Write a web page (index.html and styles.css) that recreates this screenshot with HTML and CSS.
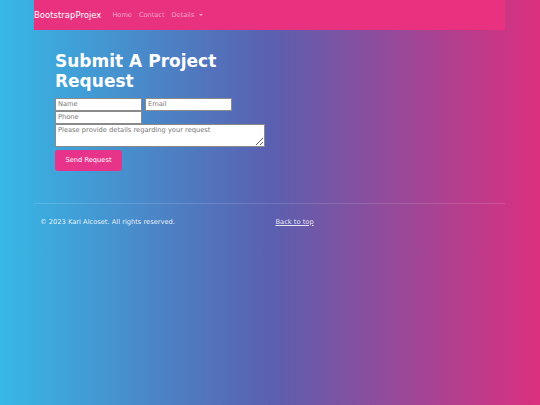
FILE: index.html
```html
<!DOCTYPE html>
<html lang="en">
<head>
<meta charset="utf-8">
<title>BootstrapProjex</title>
<link rel="stylesheet" href="styles.css">
</head>
<body>
<nav class="navbar">
  <a class="brand" href="#">BootstrapProjex</a>
  <ul class="nav-links">
    <li><a href="#">Home</a></li>
    <li><a href="#">Contact</a></li>
    <li><a href="#" class="dropdown">Details <span class="caret"></span></a></li>
  </ul>
</nav>
<main class="content">
  <h1 class="title">Submit A Project Request</h1>
  <form class="form">
    <div class="row">
      <input class="field" type="text" placeholder="Name">
      <input class="field" type="email" placeholder="Email">
    </div>
    <div class="row">
      <input class="field" type="tel" placeholder="Phone">
    </div>
    <textarea class="details" placeholder="Please provide details regarding your request"></textarea>
    <button class="btn" type="button">Send Request</button>
  </form>
</main>
<footer class="footer">
  <div class="footer-row">
    <p class="copy">© 2023 Kari Alcoset. All rights reserved.</p>
    <p class="top"><a href="#">Back to top</a></p>
  </div>
</footer>
</body>
</html>
```
FILE: styles.css
```css
html, body {
  margin: 0;
  padding: 0;
}
body {
  font-family: "DejaVu Sans", sans-serif;
  min-height: 405px;
  background: linear-gradient(90deg, #36b8e6 0%, #5a60b0 50%, #dc2f7f 100%);
  color: #fff;
}
.navbar {
  margin: 0 35px 0 34px;
  height: 30px;
  background: #e8327f;
  display: flex;
  align-items: center;
}
.brand {
  display: block;
  font-size: 8.5px;
  line-height: 10px;
  color: #fff;
  text-decoration: none;
  margin-right: 11px;
}
.nav-links {
  list-style: none;
  margin: 0;
  padding: 0;
  display: flex;
  align-items: center;
  gap: 7px;
  font-size: 6.6px;
  line-height: 10px;
}
.nav-links li {
  display: block;
}
.nav-links a {
  color: rgba(255, 255, 255, 0.55);
  text-decoration: none;
}
.caret {
  display: inline-block;
  width: 0;
  height: 0;
  margin-left: 2px;
  vertical-align: 1px;
  border-left: 2px solid transparent;
  border-right: 2px solid transparent;
  border-top: 2px solid rgba(255, 255, 255, 0.55);
}
.content {
  padding: 0 0 0 55px;
}
.title {
  font-size: 17px;
  line-height: 20.4px;
  font-weight: bold;
  margin: 21px 0 6px;
  width: 220px;
}
.form {
  display: flex;
  flex-direction: column;
  align-items: flex-start;
}
.row {
  display: flex;
  gap: 3px;
}
.field {
  box-sizing: border-box;
  width: 87px;
  height: 13px;
  margin: 0;
  padding: 0 2px;
  border: 1px solid #8a8a8a;
  background: #fff;
  font-family: "DejaVu Sans", sans-serif;
  font-size: 6.7px;
  color: #333;
}
.field::placeholder,
.details::placeholder {
  color: #777;
}
.details {
  box-sizing: border-box;
  width: 210px;
  height: 23px;
  margin: 0;
  padding: 1px 2px;
  border: 1px solid #8a8a8a;
  background: #fff;
  font-family: "DejaVu Sans", sans-serif;
  font-size: 6.7px;
  color: #333;
  resize: vertical;
}
.btn {
  margin-top: 3px;
  width: 67px;
  height: 21px;
  border: 0;
  border-radius: 3px;
  background: #e8338a;
  color: #fff;
  font-family: "DejaVu Sans", sans-serif;
  font-size: 6.7px;
  padding: 0;
}
.footer {
  margin: 32px 35px 0 34px;
  border-top: 1px solid rgba(255, 255, 255, 0.15);
}
.footer-row {
  display: grid;
  grid-template-columns: 1fr 1fr;
  padding-top: 13px;
}
.footer-row p {
  margin: 0;
  padding: 0 6px;
  font-size: 6.7px;
  line-height: 10px;
}
.copy {
  color: rgba(255, 255, 255, 0.9);
}
.top a {
  color: rgba(255, 255, 255, 0.85);
}
```
